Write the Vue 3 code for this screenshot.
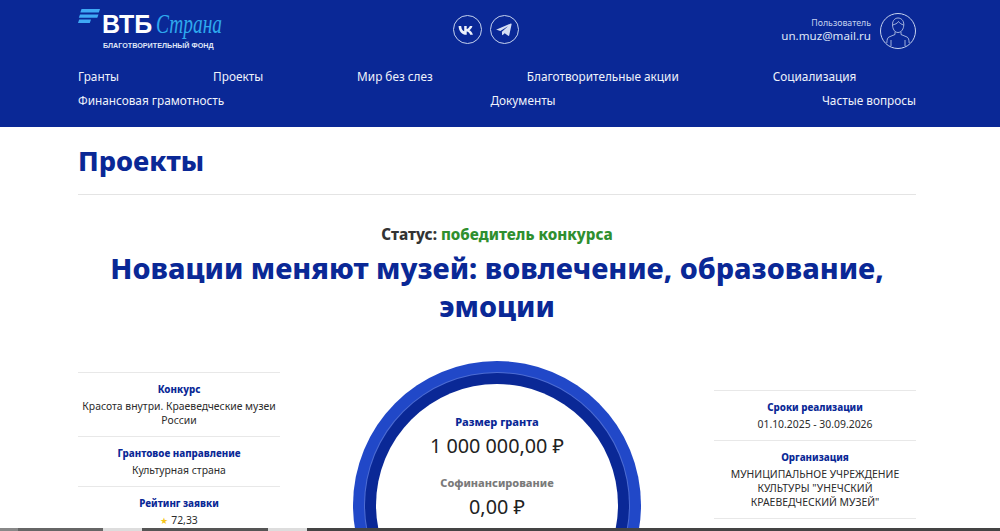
<template>
  <div class="page">
    <header class="header">
      <div class="container">
        <div class="top-row">
          <div class="logo">
            <svg class="logo-mark" width="22" height="15" viewBox="0 0 22 15">
              <polygon points="3.5,0 22,0 20.8,3.4 2.3,3.4" fill="#3fa9f5" />
              <polygon points="2,5.4 20.5,5.4 19.3,8.8 0.8,8.8" fill="#3fa9f5" />
              <polygon points="1.2,10.6 13,10.6 11.8,14 0,14" fill="#3fa9f5" />
            </svg>
            <div class="logo-text">
              <div class="logo-line">
                <span class="logo-vtb">ВТБ</span>
                <span class="logo-strana">Страна</span>
              </div>
              <div class="logo-sub">БЛАГОТВОРИТЕЛЬНЫЙ ФОНД</div>
            </div>
          </div>
          <div class="socials">
            <span class="social">
              <svg width="18" height="12" viewBox="0 0 18 12">
                <path d="M0.6 1h2.6c.2 3.4 1.7 5 3 5.3V1h2.5v3c1.3-.2 2.6-1.6 3.2-3h2.500c-.4 2-1.900 3.500-3 4.200 1.100.6 2.800 2 3.500 4.600h-2.700c-.6-1.800-2-3.100-3.500-3.300v3.300h-.4C4.200 9.800.8 6.600.6 1z" fill="#eef2fb" transform="translate(0 1)" />
              </svg>
            </span>
            <span class="social">
              <svg width="16" height="14" viewBox="0 0 18 16">
                <path d="M0.500 7.300 16.800 .6c.6-.2 1 .2.9.9l-2.700 12.600c-.1.700-.7.800-1.200.5l-4-3-2.200 2.100c-.4.300-.8.200-.8-.3l-.2-3.500 7-6.300-8.800 5.400-4.200-1.300c-.6-.2-.6-.6-.1-.8z" fill="#d5def3" />
              </svg>
            </span>
          </div>
          <div class="user">
            <div class="user-text">
              <div class="user-label">Пользователь</div>
              <div class="user-mail">un.muz@mail.ru</div>
            </div>
            <span class="avatar">
              <svg width="34" height="34" viewBox="0 0 34 34" fill="none" stroke="#c5d2ee" stroke-width="0.8">
                <path d="M11.500 10.500c0-4 2.500-6.500 5.500-6.500s5.800 2.300 5.800 6.500c0 4.500-2.500 8-5.800 8s-5.500-3.500-5.500-8z" />
                <path d="M11.500 11c2-.5 5-1.500 6-3.500 1 1.500 3 3 5.300 3.500" />
                <path d="M14 17.500v3l-6 2.500c-1.500.7-2 2.500-2.200 6M20 17.500v3l6 2.500c1.500.7 2 2.500 2.200 6" />
                <path d="M10 26v6M24 26v6" />
              </svg>
            </span>
          </div>
        </div>
        <nav class="nav nav-first">
          <a v-for="item in navTop" :key="item">{{ item }}</a>
        </nav>
        <nav class="nav nav-second">
          <a v-for="item in navBottom" :key="item">{{ item }}</a>
        </nav>
      </div>
    </header>

    <main class="container">
      <h1 class="page-title">Проекты</h1>
      <div class="status">Статус: <span class="status-win">победитель конкурса</span></div>
      <h2 class="project-title">Новации меняют музей: вовлечение, образование, эмоции</h2>

      <div class="info">
        <div class="side">
          <div v-for="row in leftRows" :key="row.label" class="side-row">
            <div class="side-label">{{ row.label }}</div>
            <div class="side-value"><span v-if="row.star" class="star">★</span>{{ row.value }}</div>
          </div>
        </div>
        <div class="circle-wrap">
          <div class="circle-outer">
            <div class="circle-inner">
              <div class="circle-body">
                <div class="money-label">Размер гранта</div>
                <div class="money">1 000 000,00 ₽</div>
                <div class="money-label money-grey">Софинансирование</div>
                <div class="money">0,00 ₽</div>
              </div>
            </div>
          </div>
        </div>
        <div class="side side-right">
          <div v-for="row in rightRows" :key="row.label" class="side-row">
            <div class="side-label">{{ row.label }}</div>
            <div class="side-value">{{ row.value }}</div>
          </div>
        </div>
      </div>
    </main>
    <div class="bottom-strip"></div>
  </div>
</template>

<script setup>
const navTop = ['Гранты', 'Проекты', 'Мир без слез', 'Благотворительные акции', 'Социализация']
const navBottom = ['Финансовая грамотность', 'Документы', 'Частые вопросы']

const leftRows = [
  { label: 'Конкурс', value: 'Красота внутри. Краеведческие музеи России' },
  { label: 'Грантовое направление', value: 'Культурная страна' },
  { label: 'Рейтинг заявки', value: '72,33', star: true }
]
const rightRows = [
  { label: 'Сроки реализации', value: '01.10.2025 - 30.09.2026' },
  { label: 'Организация', value: 'МУНИЦИПАЛЬНОЕ УЧРЕЖДЕНИЕ КУЛЬТУРЫ "УНЕЧСКИЙ КРАЕВЕДЧЕСКИЙ МУЗЕЙ"' }
]
</script>

<style>
html, body { margin: 0; height: 531px; overflow: hidden; background: #fff; }
</style>

<style scoped>
.page { height: 531px; overflow: hidden; position: relative; font-family: "Noto Sans", "Open Sans", sans-serif; color: #2b2b2b; }
.container { width: 838px; margin: 0 0 0 78px; }

.header { background: #0a2896; height: 127px; color: #fff; }
.top-row { display: flex; justify-content: space-between; align-items: flex-start; height: 60px; }

.logo { display: flex; align-items: flex-start; padding-top: 9px; width: 200px; }
.logo-mark { margin-right: 2px; flex-shrink: 0; }
.logo-text { padding-top: 3px; }
.logo-line { display: flex; align-items: baseline; height: 25px; }
.logo-vtb { font-family: "Liberation Sans", sans-serif; font-weight: 700; font-size: 25px; line-height: 25px; }
.logo-strana { font-family: "Liberation Serif", serif; font-style: italic; font-size: 27px; line-height: 25px; color: #2ea8ee; margin-left: 4px; transform: scaleX(0.72); transform-origin: left; }
.logo-sub { font-family: "Liberation Sans", sans-serif; font-weight: 700; font-size: 7.200px; line-height: 10px; margin-top: 4px; margin-left: 1px; color: #dfe6f6; white-space: nowrap; }

.socials { display: flex; gap: 8px; padding-top: 15px; margin-right: 88px; }
.social { width: 27px; height: 27px; border: 1px solid #c5d2ee; border-radius: 50%; display: flex; align-items: center; justify-content: center; }

.user { display: flex; align-items: flex-start; gap: 9px; padding-top: 13px; }
.user-text { text-align: right; padding-top: 4px; }
.user-label { font-size: 8.800px; line-height: 12px; color: #c5d2ee; }
.user-mail { font-size: 11.600px; line-height: 14px; color: #dfe6f6; }
.avatar { width: 34px; height: 34px; border: 1px solid #c5d2ee; border-radius: 50%; overflow: hidden; display: block; }

.nav { display: flex; font-size: 11.800px; line-height: 16px; color: #eef2fb; white-space: nowrap; }
.nav-first { gap: 94px; margin-top: 8px; }
.nav-second { justify-content: space-between; margin-top: 8px; }

.page-title { margin: 0; padding: 17px 0 16px; font-size: 27.200px; line-height: 34px; font-weight: 800; color: #0a2896; border-bottom: 1px solid #e4e4e4; }
.status { margin-top: 29px; text-align: center; font-size: 15.200px; line-height: 20px; font-weight: 800; color: #333; }
.status-win { color: #2f8f2f; }
.project-title { margin: 5px auto 0; width: 800px; text-align: center; font-size: 28.800px; line-height: 38px; font-weight: 800; color: #0a2896; }

.info { display: flex; justify-content: space-between; align-items: flex-start; margin-top: 47px; }
.side { width: 202px; font-size: 10.400px; line-height: 14px; text-align: center; }
.side-right { margin-top: 18px; }
.side-row { border-top: 1px solid #e8e8e8; padding: 9px 0; }
.side-row:last-child { border-bottom: 1px solid #e8e8e8; }
.side-label { font-weight: 800; color: #0a2896; margin-bottom: 2px; font-size: 9.800px; line-height: 15px; }
.side-value { color: #2b2b2b; }
.star { color: #f5c518; font-size: 9px; margin-right: 3px; }

.circle-wrap { width: 288px; flex-shrink: 0; margin-top: -11px; }
.circle-outer { width: 288px; height: 288px; border-radius: 50%; background: #2148c8; padding: 12px; box-sizing: border-box; }
.circle-inner { width: 264px; height: 264px; border-radius: 50%; background: #0a2896; padding: 11px; box-sizing: border-box; box-shadow: 0 0 0 1px rgba(255, 255, 255, 0.2); }
.circle-body { width: 242px; height: 242px; border-radius: 50%; background: #fff; text-align: center; padding-top: 30px; box-sizing: border-box; }
.money-label { font-size: 11px; line-height: 16px; font-weight: 800; color: #0a2896; }
.money-grey { color: #7a7a7a; margin-top: 16px; }
.money { font-size: 19.800px; line-height: 26px; margin-top: 3px; color: #222; }

.bottom-strip { position: absolute; left: 0; right: 0; bottom: 0; height: 3px; background: linear-gradient(90deg, #888 0 18px, #666 18px 103px, #ddd 103px 142px, #555 142px 268px, #ddd 268px 307px, #444 307px); }
</style>
